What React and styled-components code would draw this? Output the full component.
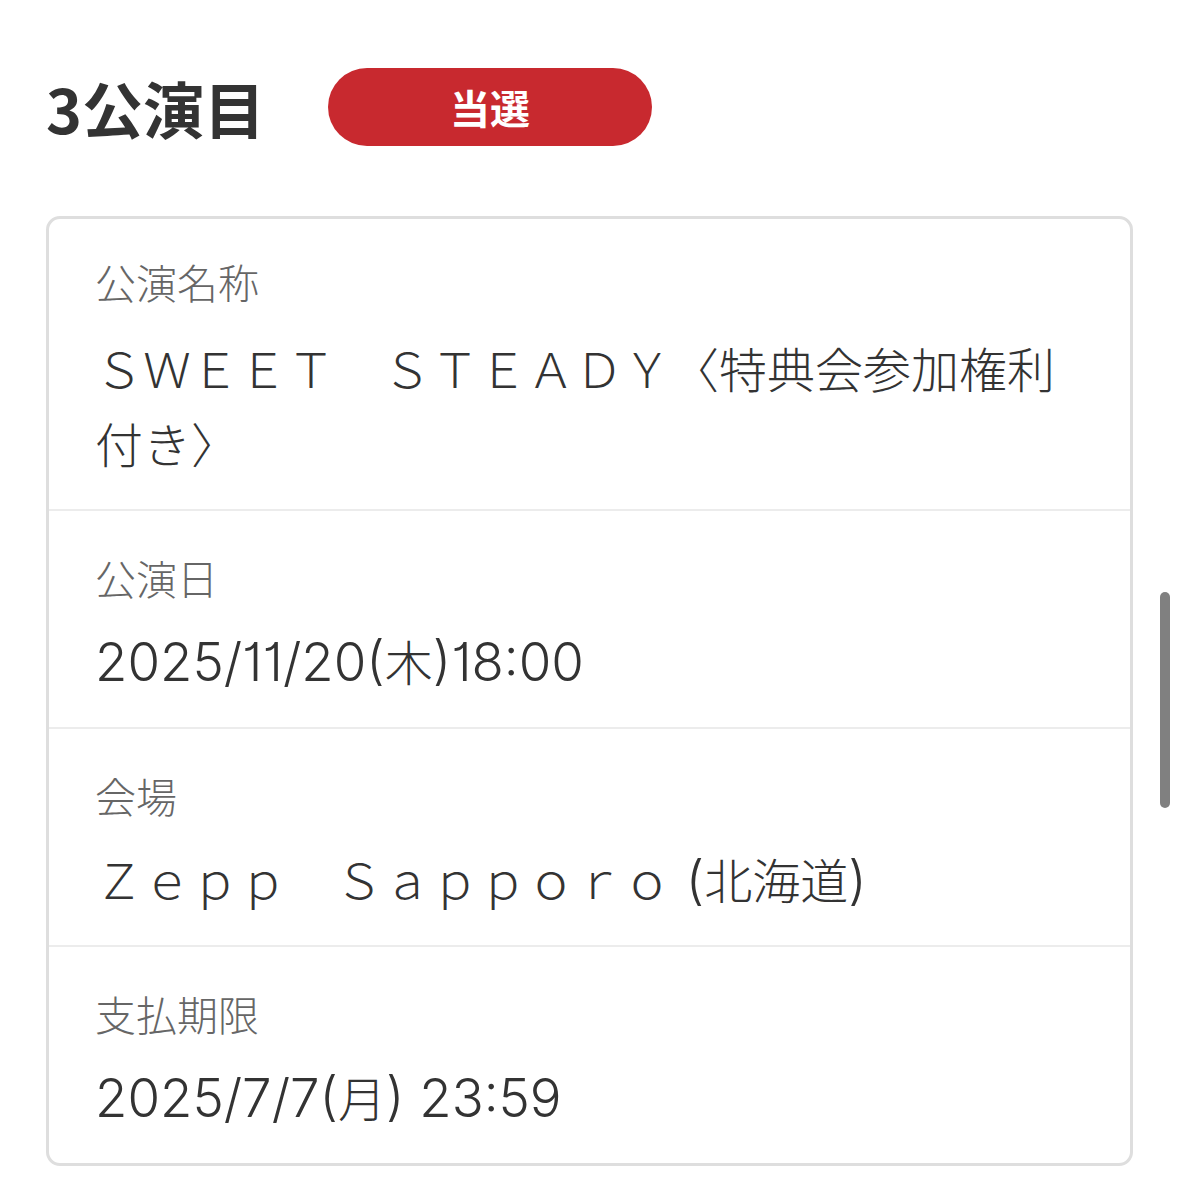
import React from 'react';
import styled, { createGlobalStyle } from 'styled-components';

const GlobalStyle = createGlobalStyle`
  html, body {
    margin: 0;
    padding: 0;
    background: #fff;
  }
  body {
    font-family: "Noto Sans CJK JP", "Noto Sans", sans-serif;
    color: #333;
  }
`;

const Page = styled.div`
  position: relative;
  width: 1179px;
  height: 1191px;
  padding: 60px 46px 0;
  box-sizing: border-box;
  overflow: hidden;
`;

const Header = styled.div`
  display: flex;
  align-items: center;
  gap: 63px;
  height: 94px;
  margin-bottom: 62px;
`;

const Title = styled.h2`
  margin: 0;
  font-size: 61px;
  font-weight: 700;
  color: #333;
`;

const Badge = styled.span`
  display: flex;
  align-items: center;
  justify-content: center;
  width: 324px;
  height: 78px;
  border-radius: 39px;
  background: #c8292f;
  color: #fff;
  font-size: 40px;
  font-weight: 700;
`;

const Card = styled.div`
  border: 3px solid #dedede;
  border-radius: 14px;
  background: #fff;
`;

const Row = styled.div`
  display: flex;
  flex-direction: column;
  gap: ${p => (p.$first ? 23 : 20)}px;
  padding: ${p => (p.$first ? 36 : 40)}px 46px 29px;
  border-top: ${p => (p.$first ? 'none' : '2px solid #ececec')};
`;

const Label = styled.div`
  font-size: 41px;
  font-weight: 300;
  line-height: 52px;
  color: #666;
`;

const Value = styled.div`
  font-size: 48px;
  font-weight: 300;
  line-height: 75px;
  color: #333;
  word-break: break-all;
`;

// half-width runs (digits, parens) use a lighter latin face, a bit larger
const Latin = styled.span`
  font-family: Inter, "Liberation Sans", sans-serif;
  font-weight: 300;
  font-size: 1.1em;
  line-height: 0;
  font-feature-settings: "cv01";
`;

const Scroll = styled.div`
  position: absolute;
  left: 1160px;
  top: 592px;
  width: 10px;
  height: 216px;
  border-radius: 5px;
  background: #808080;
`;

const rows = [
  { label: '公演名称', value: 'ＳＷＥＥＴ　ＳＴＥＡＤＹ〈特典会参加権利付き〉' },
  { label: '公演日', value: '2025/11/20(木)18:00' },
  { label: '会場', value: 'Ｚｅｐｐ　Ｓａｐｐｏｒｏ (北海道)' },
  { label: '支払期限', value: '2025/7/7(月) 23:59' },
];

const renderValue = text =>
  text
    .split(/([\x20-\x7e]+)/)
    .filter(Boolean)
    .map((part, i) =>
      /^[\x20-\x7e]+$/.test(part) ? <Latin key={i}>{part}</Latin> : <React.Fragment key={i}>{part}</React.Fragment>
    );

export default function App() {
  return (
    <>
      <GlobalStyle />
      <Page>
        <Header>
          <Title>3公演目</Title>
          <Badge>当選</Badge>
        </Header>
        <Card>
          {rows.map((r, i) => (
            <Row key={r.label} $first={i === 0}>
              <Label>{r.label}</Label>
              <Value>{renderValue(r.value)}</Value>
            </Row>
          ))}
        </Card>
        <Scroll />
      </Page>
    </>
  );
}
